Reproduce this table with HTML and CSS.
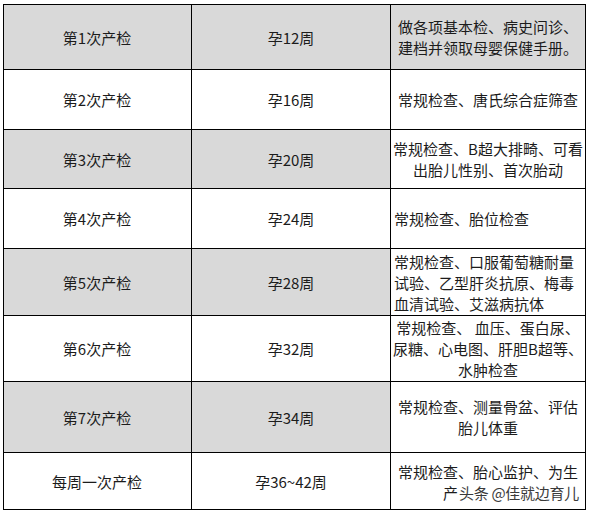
FILE: index.html
```html
<!DOCTYPE html>
<html lang="zh-CN">
<head>
<meta charset="utf-8">
<title>产检时间表</title>
<link rel="stylesheet" href="styles.css">
</head>
<body>
<div class="page">
  <div class="sheet">
    <div class="cell c1 gray r1">第1次产检</div>
    <div class="cell c2 gray r1">孕12周</div>
    <div class="cell c3 gray r1 center">做各项基本检、病史问诊、<br>建档并领取母婴保健手册。</div>

    <div class="cell c1 r2">第2次产检</div>
    <div class="cell c2 r2">孕16周</div>
    <div class="cell c3 r2 center">常规检查、唐氏综合症筛查</div>

    <div class="cell c1 gray r3">第3次产检</div>
    <div class="cell c2 gray r3">孕20周</div>
    <div class="cell c3 r3 center">常规检查、B超大排畸、可看<br>出胎儿性别、首次胎动</div>

    <div class="cell c1 r4">第4次产检</div>
    <div class="cell c2 r4">孕24周</div>
    <div class="cell c3 r4 left">常规检查、胎位检查</div>

    <div class="cell c1 gray r5">第5次产检</div>
    <div class="cell c2 gray r5">孕28周</div>
    <div class="cell c3 r5 left">常规检查、口服葡萄糖耐量<br>试验、乙型肝炎抗原、梅毒<br>血清试验、艾滋病抗体</div>

    <div class="cell c1 r6">第6次产检</div>
    <div class="cell c2 r6">孕32周</div>
    <div class="cell c3 r6 center">常规检查、 血压、蛋白尿、<br>尿糖、心电图、肝胆B超等、<br>水肿检查</div>

    <div class="cell c1 gray r7">第7次产检</div>
    <div class="cell c2 gray r7">孕34周</div>
    <div class="cell c3 r7 center">常规检查、测量骨盆、评估<br>胎儿体重</div>

    <div class="cell c1 r8">每周一次产检</div>
    <div class="cell c2 r8">孕36~42周</div>
    <div class="cell c3 r8 stack">
      <div class="line">常规检查、胎心监护、为生</div>
      <div class="line second">产<span class="watermark">头条 @佳就边育儿</span></div>
    </div>
  </div>
</div>
</body>
</html>
```

FILE: styles.css
```css
html, body {
  margin: 0;
  padding: 0;
  background: #ffffff;
}

.page {
  padding: 4px 0 0 3px;
}

.sheet {
  display: grid;
  grid-template-columns: 187px 198px 194px;
  grid-template-rows: 64px 59px 58px 59px 66px 65px 70px 56px;
  gap: 1px;
  padding: 1px;
  background: #000000;
  width: 581px;
  font-family: "Noto Sans CJK SC", "Noto Sans", sans-serif;
  font-size: 15px;
  line-height: 21px;
  color: #1c1c1c;
}

.cell {
  background: #ffffff;
  display: flex;
  align-items: center;
  justify-content: center;
  text-align: center;
  white-space: nowrap;
  padding: 0 3px;
}

.cell.gray {
  background: #d9d9d9;
}

.c1 {
  padding-left: 0;
  padding-right: 1px;
}

.c3.left {
  justify-content: flex-start;
  text-align: left;
}

.c3.center {
  text-align: center;
}

.c3.stack {
  flex-direction: column;
  align-items: stretch;
  justify-content: center;
  padding: 1px 3px 0;
}

.line {
  text-align: center;
}

.line.second {
  text-align: left;
  padding-left: 49px;
}

.watermark {
  margin-left: 1px;
  color: #3a3a3a;
  text-shadow: 0 0 1px #ffffff, 0 0 2px #ffffff;
  letter-spacing: -0.3px;
}
```
